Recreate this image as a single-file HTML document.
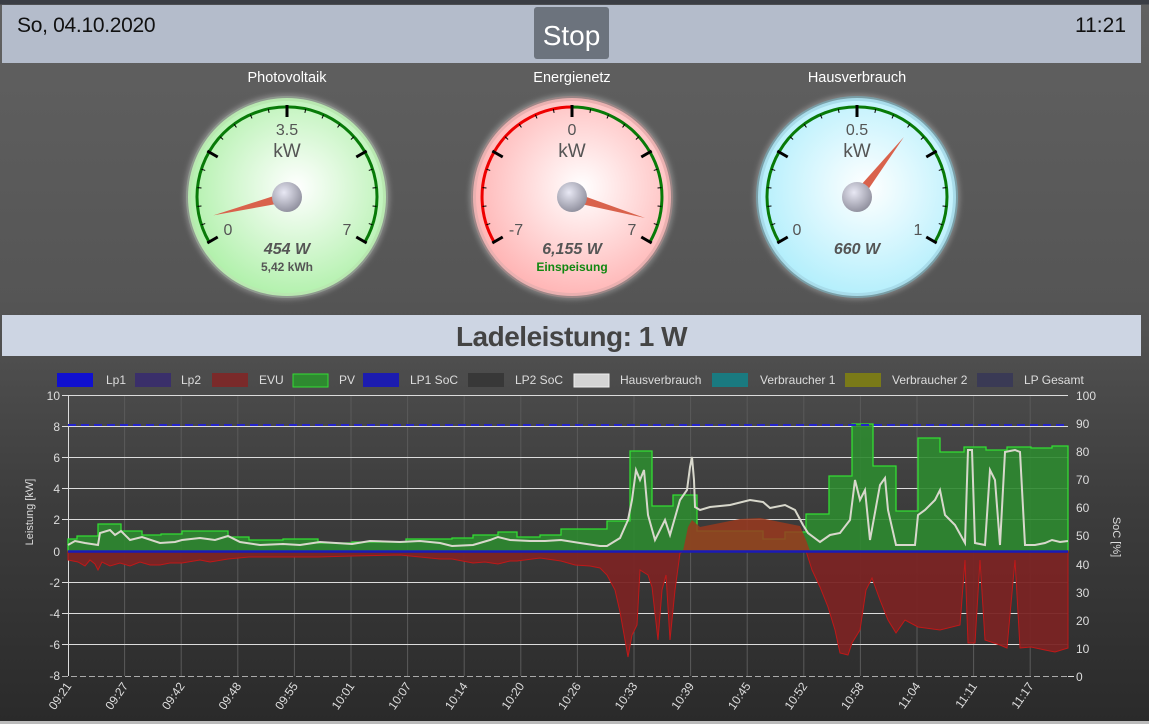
<!DOCTYPE html>
<html><head><meta charset="utf-8"><style>
html,body{margin:0;padding:0}
body{width:1149px;height:724px;overflow:hidden;position:relative;font-family:"Liberation Sans",sans-serif;background:linear-gradient(#3a3d44 0,#3a3d44 4px,#616161 5px,#555 300px,#3d3d3d 500px,#2a2a2a 724px)}
.hdr{position:absolute;left:2px;top:5px;width:1139px;height:58px;background:#b4bccb}
.date{position:absolute;left:15px;top:9px;font-size:21px;color:#111;letter-spacing:-0.3px}
.time{position:absolute;right:15px;top:9px;font-size:21px;color:#111}
.stop{position:absolute;left:532px;top:2px;width:75px;height:52px;background:#6c737d;border-radius:3px;color:#fff;font-size:28px;text-align:center;line-height:58px}
.lade{position:absolute;left:2px;top:315px;width:1139px;height:41px;background:#cdd5e3;text-align:center;font-weight:bold;font-size:28px;color:#444;line-height:43px;letter-spacing:-0.5px}
svg{position:absolute;left:0;top:0}
</style></head><body>
<div class="hdr"><div class="date">So, 04.10.2020</div><div class="stop">Stop</div><div class="time">11:21</div></div>
<div class="lade">Ladeleistung: 1 W</div>
<svg width="1149" height="724" viewBox="0 0 1149 724" font-family="Liberation Sans, sans-serif">
<defs>
<radialGradient id="gG" cx="0.55" cy="0.45" r="0.6"><stop offset="0" stop-color="#fff"/><stop offset="1" stop-color="#aef0a8"/></radialGradient>
<radialGradient id="gR" cx="0.55" cy="0.45" r="0.6"><stop offset="0" stop-color="#fff"/><stop offset="1" stop-color="#ffb2b2"/></radialGradient>
<radialGradient id="gB" cx="0.55" cy="0.45" r="0.6"><stop offset="0" stop-color="#fff"/><stop offset="1" stop-color="#b0eefc"/></radialGradient>
<radialGradient id="hub" cx="0.4" cy="0.35" r="0.7"><stop offset="0" stop-color="#e8e8f4"/><stop offset="1" stop-color="#8c8c9a"/></radialGradient>
<filter id="glow" x="-20%" y="-20%" width="140%" height="140%"><feGaussianBlur stdDeviation="2.5"/></filter>
<g id="ticks" stroke="#000">
<g stroke-width="1"><line x1="0" y1="-86" x2="0" y2="-90" transform="rotate(-108)"/><line x1="0" y1="-86" x2="0" y2="-90" transform="rotate(-96)"/><line x1="0" y1="-86" x2="0" y2="-90" transform="rotate(-84)"/><line x1="0" y1="-86" x2="0" y2="-90" transform="rotate(-72)"/><line x1="0" y1="-86" x2="0" y2="-90" transform="rotate(-48)"/><line x1="0" y1="-86" x2="0" y2="-90" transform="rotate(-36)"/><line x1="0" y1="-86" x2="0" y2="-90" transform="rotate(-24)"/><line x1="0" y1="-86" x2="0" y2="-90" transform="rotate(-12)"/><line x1="0" y1="-86" x2="0" y2="-90" transform="rotate(12)"/><line x1="0" y1="-86" x2="0" y2="-90" transform="rotate(24)"/><line x1="0" y1="-86" x2="0" y2="-90" transform="rotate(36)"/><line x1="0" y1="-86" x2="0" y2="-90" transform="rotate(48)"/><line x1="0" y1="-86" x2="0" y2="-90" transform="rotate(72)"/><line x1="0" y1="-86" x2="0" y2="-90" transform="rotate(84)"/><line x1="0" y1="-86" x2="0" y2="-90" transform="rotate(96)"/><line x1="0" y1="-86" x2="0" y2="-90" transform="rotate(108)"/></g>
<g stroke-width="3"><line x1="0" y1="-80" x2="0" y2="-92" transform="rotate(-120)"/><line x1="0" y1="-80" x2="0" y2="-92" transform="rotate(-60)"/><line x1="0" y1="-80" x2="0" y2="-92" transform="rotate(0)"/><line x1="0" y1="-80" x2="0" y2="-92" transform="rotate(60)"/><line x1="0" y1="-80" x2="0" y2="-92" transform="rotate(120)"/></g>
</g>
</defs>
<g fill="#fff" font-size="14.5" text-anchor="middle"><text x="287" y="82">Photovoltaik</text><text x="572" y="82">Energienetz</text><text x="857" y="82">Hausverbrauch</text></g>

<g transform="translate(287,197)">
<circle r="103" fill="rgba(255,255,255,0.25)" filter="url(#glow)"/>
<circle r="101" fill="#8f9a8f"/><circle r="99" fill="#b8e8b0"/><circle r="96" fill="url(#gG)"/>
<path d="M -77.9 45 A 90 90 0 1 1 77.9 45" fill="none" stroke="#087a08" stroke-width="3"/>
<use href="#ticks"/>
<g fill="#555" text-anchor="middle" font-size="16"><text x="0" y="-62">3.5</text><text x="0" y="-40" font-size="19">kW</text><text x="-59" y="38">0</text><text x="60" y="38">7</text></g>
<polygon points="-5,0 0,-76 5,0" fill="#d9624c" transform="rotate(-104)"/>
<circle r="15" fill="url(#hub)"/>
<text x="0" y="57" text-anchor="middle" font-size="16" font-weight="bold" font-style="italic" fill="#555">454 W</text>
<text x="0" y="74" text-anchor="middle" font-size="12" font-weight="bold" fill="#555">5,42 kWh</text>
</g>

<g transform="translate(572,197)">
<circle r="103" fill="rgba(255,255,255,0.25)" filter="url(#glow)"/>
<circle r="101" fill="#9a8686"/><circle r="99" fill="#eab0b0"/><circle r="96" fill="url(#gR)"/>
<path d="M -77.9 45 A 90 90 0 0 1 0 -90" fill="none" stroke="#ee0000" stroke-width="3"/>
<path d="M 0 -90 A 90 90 0 0 1 77.9 45" fill="none" stroke="#087a08" stroke-width="3"/>
<use href="#ticks"/>
<g fill="#555" text-anchor="middle" font-size="16"><text x="0" y="-62">0</text><text x="0" y="-40" font-size="19">kW</text><text x="-56" y="38">-7</text><text x="60" y="38">7</text></g>
<polygon points="-5,0 0,-76 5,0" fill="#d9624c" transform="rotate(106)"/>
<circle r="15" fill="url(#hub)"/>
<text x="0" y="57" text-anchor="middle" font-size="16" font-weight="bold" font-style="italic" fill="#555">6,155 W</text>
<text x="0" y="74" text-anchor="middle" font-size="12" font-weight="bold" fill="#118811">Einspeisung</text>
</g>

<g transform="translate(857,197)">
<circle r="103" fill="rgba(255,255,255,0.25)" filter="url(#glow)"/>
<circle r="101" fill="#7a9ea6"/><circle r="99" fill="#a8dcea"/><circle r="96" fill="url(#gB)"/>
<path d="M -77.9 45 A 90 90 0 1 1 77.9 45" fill="none" stroke="#087a08" stroke-width="3"/>
<use href="#ticks"/>
<g fill="#555" text-anchor="middle" font-size="16"><text x="0" y="-62">0.5</text><text x="0" y="-40" font-size="19">kW</text><text x="-60" y="38">0</text><text x="61" y="38">1</text></g>
<polygon points="-5,0 0,-76 5,0" fill="#d9624c" transform="rotate(38)"/>
<circle r="15" fill="url(#hub)"/>
<text x="0" y="57" text-anchor="middle" font-size="16" font-weight="bold" font-style="italic" fill="#555">660 W</text>
</g>

<g font-size="12" fill="#ddd">
<rect x="57" y="373" width="36" height="14" fill="#1010d0"/><text x="106" y="384">Lp1</text>
<rect x="135" y="373" width="36" height="14" fill="#3a2f6a"/><text x="181" y="384">Lp2</text>
<rect x="212" y="373" width="36" height="14" fill="#7a2a2a"/><text x="259" y="384">EVU</text>
<rect x="293" y="374" width="35" height="13" fill="#2e8a30" stroke="#33dd33"/><text x="339" y="384">PV</text>
<rect x="363" y="373" width="36" height="14" fill="#1c1cb0"/><text x="410" y="384">LP1 SoC</text>
<rect x="468" y="373" width="36" height="14" fill="#383838"/><text x="515" y="384">LP2 SoC</text>
<rect x="574" y="374" width="35" height="13" fill="#d4d4d4" stroke="#eee"/><text x="620" y="384">Hausverbrauch</text>
<rect x="712" y="373" width="36" height="14" fill="#1a7a80"/><text x="760" y="384">Verbraucher 1</text>
<rect x="845" y="373" width="36" height="14" fill="#7a7a18"/><text x="892" y="384">Verbraucher 2</text>
<rect x="977" y="373" width="36" height="14" fill="#3a3a55"/><text x="1024" y="384">LP Gesamt</text>
</g>

<g stroke="#5a5a5a" stroke-width="1">
<line x1="124.6" y1="395" x2="124.6" y2="676"/><line x1="181.2" y1="395" x2="181.2" y2="676"/><line x1="237.8" y1="395" x2="237.8" y2="676"/><line x1="294.4" y1="395" x2="294.4" y2="676"/><line x1="351" y1="395" x2="351" y2="676"/><line x1="407.6" y1="395" x2="407.6" y2="676"/><line x1="464.2" y1="395" x2="464.2" y2="676"/><line x1="520.8" y1="395" x2="520.8" y2="676"/><line x1="577.4" y1="395" x2="577.4" y2="676"/><line x1="634" y1="395" x2="634" y2="676"/><line x1="690.6" y1="395" x2="690.6" y2="676"/><line x1="747.2" y1="395" x2="747.2" y2="676"/><line x1="803.8" y1="395" x2="803.8" y2="676"/><line x1="860.4" y1="395" x2="860.4" y2="676"/><line x1="917" y1="395" x2="917" y2="676"/><line x1="973.6" y1="395" x2="973.6" y2="676"/><line x1="1030.2" y1="395" x2="1030.2" y2="676"/>
</g>
<g stroke="#dcdcdc" stroke-width="1">
<line x1="62" y1="395.5" x2="1068" y2="395.5"/><line x1="62" y1="426.5" x2="1068" y2="426.5"/><line x1="62" y1="457.5" x2="1068" y2="457.5"/><line x1="62" y1="488.5" x2="1068" y2="488.5"/><line x1="62" y1="519.5" x2="1068" y2="519.5"/><line x1="62" y1="582.5" x2="1068" y2="582.5"/><line x1="62" y1="613.5" x2="1068" y2="613.5"/><line x1="62" y1="644.5" x2="1068" y2="644.5"/>
<line x1="68.5" y1="395" x2="68.5" y2="676"/>
<line x1="1068" y1="676.5" x2="1074" y2="676.5"/>
</g>
<line x1="62" y1="676.5" x2="1068" y2="676.5" stroke="#aaa" stroke-dasharray="6,3"/>

<polygon fill="#2e8a30" fill-opacity="0.9" stroke="#33dd33" stroke-width="1.3" points="68,551 68,539 77,539 77,536 98,536 98,524 121,524 121,531 142,531 142,535 161,535 161,534 182,534 182,531 228,531 228,537 249,537 249,540 283,540 283,539 318,539 318,543 352,543 352,542 406,542 406,539 452,539 452,538 473,538 473,535 498,535 498,532 517,532 517,537 540,537 540,535 561,535 561,529 607,529 607,521 630,521 630,451 652,451 652,506 673,506 673,495 697,495 697,531 763,531 763,539 785,539 785,532 806,532 806,514 829,514 829,476 852,476 852,424 873,424 873,466 896,466 896,511 918,511 918,438 940,438 940,452 964,452 964,447 986,447 986,450 1007,450 1007,447 1031,447 1031,448 1052,448 1052,446 1068,446 1068,551"/>
<polygon fill="#7a2424" fill-opacity="0.95" stroke="#c01818" stroke-width="1" points="68,551 68,560 78,562 85,566 90,560 95,564 98,570 102,562 110,566 120,563 130,566 140,562 150,565 160,565 170,563 182,563 200,560 210,562 228,559 249,557 283,557 318,557 352,556 400,555 420,557 440,559 452,559 473,563 485,562 498,564 510,561 517,561 540,558 561,561 575,565 590,566 600,568 607,575 615,590 620,612 625,640 628,657 632,635 637,625 640,570 648,575 652,587 658,640 662,590 666,575 670,640 675,590 680,553 685,551"/>
<polygon fill="#9a3a1e" fill-opacity="0.85" points="683,551 688,527 692,520 700,527 720,523 740,519 760,518 780,522 800,526 806,540 810,551"/>
<polygon fill="#7a2424" fill-opacity="0.95" stroke="#c01818" stroke-width="1" points="806,551 812,570 820,587 828,607 835,630 840,653 848,655 852,643 860,630 866,590 872,578 880,600 888,620 896,633 905,620 918,627 940,630 960,625 965,560 968,643 975,643 980,560 985,640 1000,645 1007,648 1015,560 1020,648 1031,647 1045,650 1055,652 1068,648 1068,551"/>
<polyline fill="none" stroke="#d8d8cc" stroke-width="2" points="68,545 75,541 85,543 98,545 100,533 110,530 115,535 121,531 130,540 142,537 160,543 175,542 182,540 200,538 215,540 228,536 240,542 260,545 283,544 300,545 320,542 352,544 370,541 400,542 420,541 440,543 452,546 473,545 490,540 498,537 510,540 530,541 545,541 561,540 580,543 600,546 607,546 620,538 628,520 632,500 636,470 640,480 644,470 648,515 655,540 665,520 670,535 680,500 687,490 690,467 692,457 694,480 695,507 700,510 710,507 730,505 750,500 763,502 770,508 785,505 795,510 803,525 808,533 820,542 830,535 840,533 850,520 855,480 860,500 865,490 870,540 880,485 885,478 888,510 896,545 910,545 915,545 918,515 925,510 935,500 940,490 945,515 955,525 965,543 968,450 972,450 975,543 985,545 990,470 995,480 1000,545 1005,452 1015,450 1020,452 1025,545 1035,545 1045,543 1052,540 1060,542 1068,541"/>
<line x1="68" y1="425" x2="1068" y2="425" stroke="#2424cc" stroke-width="2" stroke-dasharray="8,5"/>
<line x1="68" y1="551.5" x2="1068" y2="551.5" stroke="#1a1ab8" stroke-width="2.5"/>

<g font-size="12" fill="#ddd" text-anchor="end">
<text x="60" y="400">10</text><text x="60" y="431">8</text><text x="60" y="462">6</text><text x="60" y="493">4</text><text x="60" y="524">2</text><text x="60" y="556">0</text><text x="60" y="587">-2</text><text x="60" y="618">-4</text><text x="60" y="649">-6</text><text x="60" y="680">-8</text>
</g>
<g font-size="12" fill="#ddd">
<text x="1076" y="400">100</text><text x="1076" y="428">90</text><text x="1076" y="456">80</text><text x="1076" y="484">70</text><text x="1076" y="512">60</text><text x="1076" y="540">50</text><text x="1076" y="569">40</text><text x="1076" y="597">30</text><text x="1076" y="625">20</text><text x="1076" y="653">10</text><text x="1076" y="681">0</text>
</g>
<text transform="translate(33,512) rotate(-90)" font-size="11" fill="#ddd" text-anchor="middle">Leistung [kW]</text>
<text transform="translate(1113,537) rotate(90)" font-size="11" fill="#ddd" text-anchor="middle">SoC [%]</text>
<g font-size="12" fill="#ddd" text-anchor="end">
<text transform="translate(72,686) rotate(-55)">09:21</text><text transform="translate(128.6,686) rotate(-55)">09:27</text><text transform="translate(185.2,686) rotate(-55)">09:42</text><text transform="translate(241.8,686) rotate(-55)">09:48</text><text transform="translate(298.4,686) rotate(-55)">09:55</text><text transform="translate(355,686) rotate(-55)">10:01</text><text transform="translate(411.6,686) rotate(-55)">10:07</text><text transform="translate(468.2,686) rotate(-55)">10:14</text><text transform="translate(524.8,686) rotate(-55)">10:20</text><text transform="translate(581.4,686) rotate(-55)">10:26</text><text transform="translate(638,686) rotate(-55)">10:33</text><text transform="translate(694.6,686) rotate(-55)">10:39</text><text transform="translate(751.2,686) rotate(-55)">10:45</text><text transform="translate(807.8,686) rotate(-55)">10:52</text><text transform="translate(864.4,686) rotate(-55)">10:58</text><text transform="translate(921,686) rotate(-55)">11:04</text><text transform="translate(977.6,686) rotate(-55)">11:11</text><text transform="translate(1034.2,686) rotate(-55)">11:17</text>
</g>
<rect x="0" y="721" width="1149" height="3" fill="#bbb"/>
</svg>
</body></html>
